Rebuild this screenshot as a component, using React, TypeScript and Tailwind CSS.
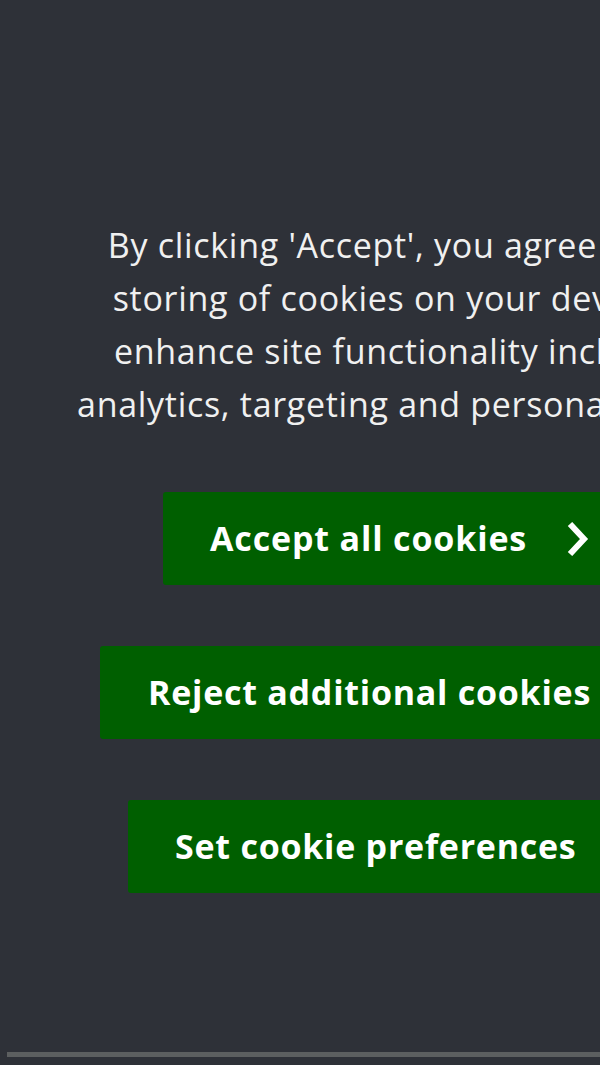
import React from 'react';

const lines = [
  "By clicking 'Accept', you agree to the",
  'storing of cookies on your device to',
  'enhance site functionality including',
  'analytics, targeting and personalisation.',
];

export default function App() {
  return (
    <div className="relative h-[1065px] w-full overflow-hidden bg-[#2e3138] font-['Open_Sans',sans-serif] text-white">
      <div className="w-[812px] pt-[219px]">
        <p className="text-center text-[34px] leading-[53px] tracking-[0.7px] whitespace-nowrap text-[#f0f0f0]">
          {lines.map((line) => (
            <span key={line} className="block">{line}</span>
          ))}
        </p>

        <div className="mt-[61px] flex flex-col items-start gap-[61px]">
          <button className="ml-[163px] flex h-[93px] items-center gap-[40px] rounded-[3px] bg-[#005f00] px-[47px] text-[34px] font-bold tracking-[0.85px]">
            Accept all cookies
            <svg width="22" height="34" viewBox="0 0 22 34" fill="none" stroke="white" strokeWidth="6" strokeLinejoin="miter">
              <path d="M3 2 L17 17 L3 32" />
            </svg>
          </button>
          <button className="ml-[100px] flex h-[93px] items-center rounded-[3px] bg-[#005f00] px-[48px] text-[34px] font-bold tracking-[0.75px]">
            Reject additional cookies
          </button>
          <button className="ml-[128px] flex h-[93px] items-center rounded-[3px] bg-[#005f00] px-[47px] text-[34px] font-bold tracking-[0.75px]">
            Set cookie preferences
          </button>
        </div>
      </div>

      {/* overlay scrollbar thumb */}
      <div className="absolute bottom-[8px] left-[7px] h-[5px] w-[640px] bg-[#5c5f60]" />
    </div>
  );
}
